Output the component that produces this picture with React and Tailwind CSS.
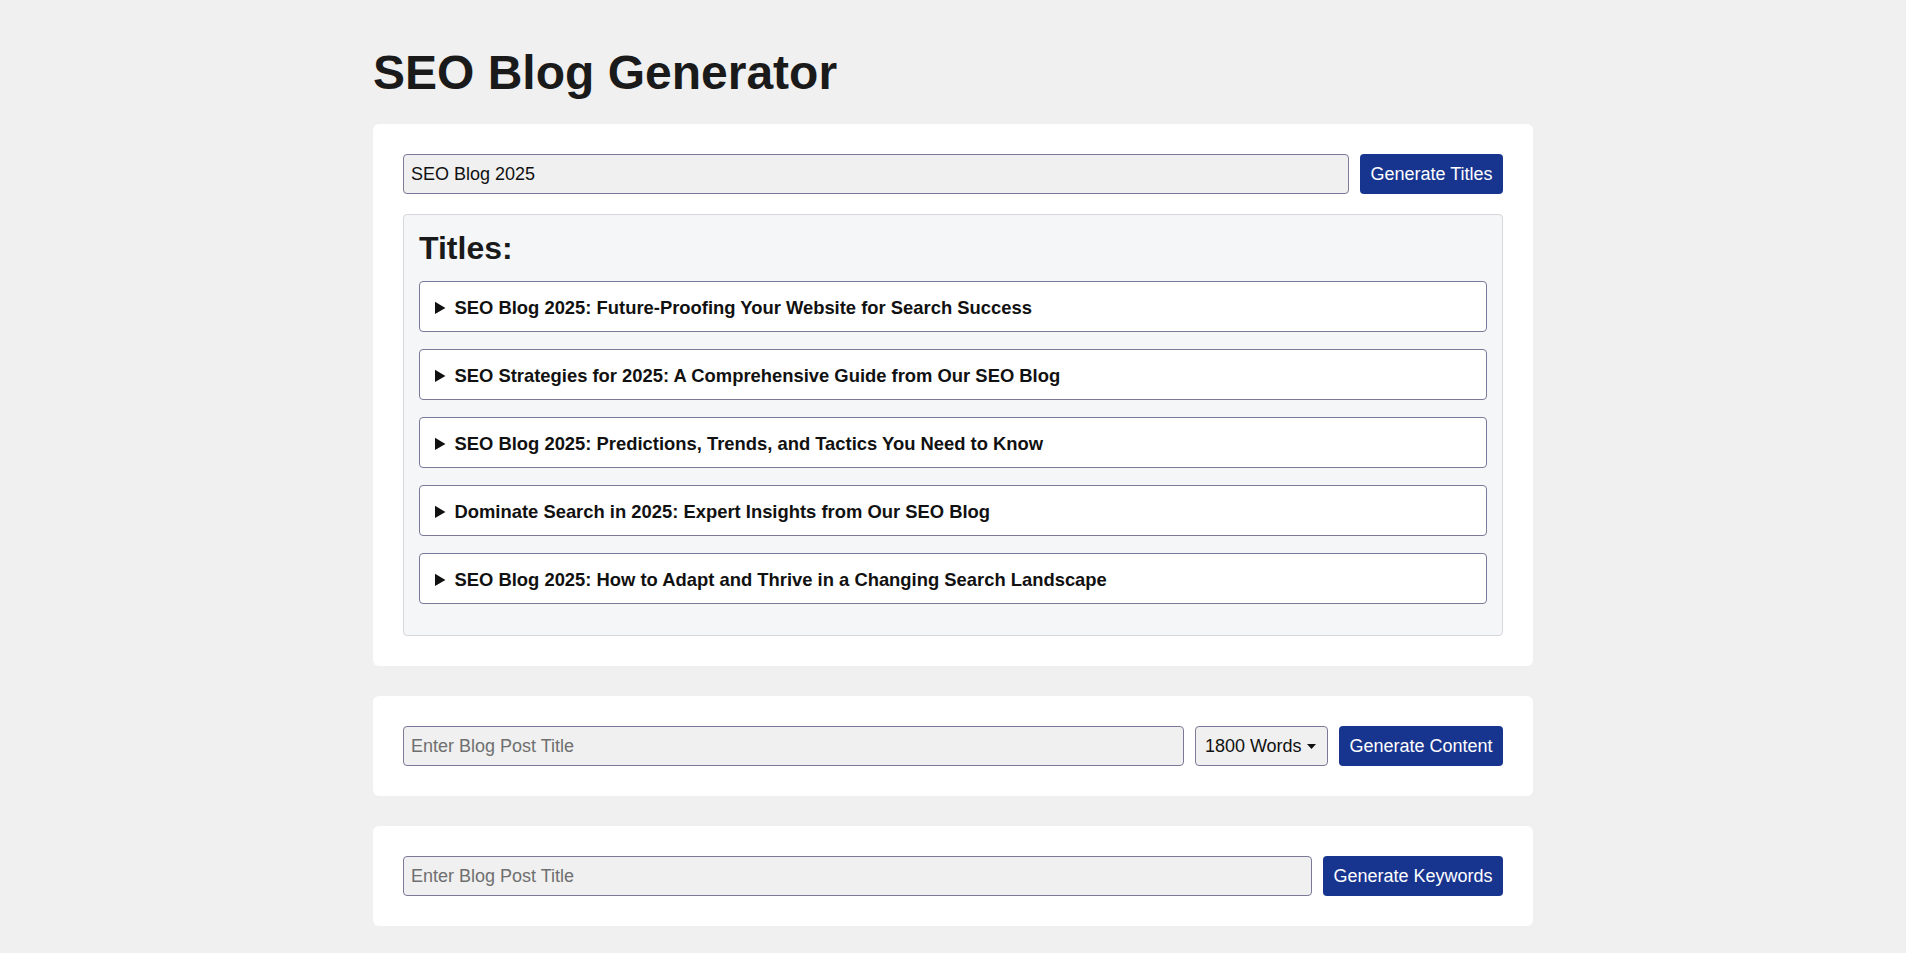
import React from "react";

const titles = [
  "SEO Blog 2025: Future-Proofing Your Website for Search Success",
  "SEO Strategies for 2025: A Comprehensive Guide from Our SEO Blog",
  "SEO Blog 2025: Predictions, Trends, and Tactics You Need to Know",
  "Dominate Search in 2025: Expert Insights from Our SEO Blog",
  "SEO Blog 2025: How to Adapt and Thrive in a Changing Search Landscape",
];

const inputCls =
  "flex-1 min-w-0 h-[40px] rounded-[4px] border border-[#7a7a98] bg-[#f0f0f0] pl-[7px] pr-[7px] text-[18px] text-[#111111] placeholder:text-[#6f6f6f] outline-none";
const btnCls =
  "h-[40px] shrink-0 rounded-[4px] bg-[#17348f] px-[10.5px] text-[18px] text-white whitespace-nowrap";

export default function App() {
  return (
    <div
      className="min-h-screen bg-[#f0f0f0] text-[#1a1a1a]"
      style={{ fontFamily: '"Liberation Sans", Arial, Helvetica, sans-serif' }}
    >
      <div className="mx-auto w-[1160px] pt-[45px] pb-[27px]">
        <h1 className="mb-[24px] text-[48px] font-bold leading-[55px] text-[#1a1a1a]">
          SEO Blog Generator
        </h1>

        <div className="flex flex-col gap-[30px]">
          <div className="rounded-[6px] bg-white p-[30px]">
            <div className="flex gap-[11px]">
              <input className={inputCls} defaultValue="SEO Blog 2025" />
              <button className={btnCls}>Generate Titles</button>
            </div>
            <div className="mt-[20px] rounded-[4px] border border-[#d6d7db] bg-[#f5f6f8] px-[15px] pt-[15px] pb-[15px]">
              <h2 className="mb-[14px] text-[32px] font-bold leading-[37px] text-[#1a1a1a]">
                Titles:
              </h2>
              <div className="flex flex-col gap-[17px]">
                {titles.map((t) => (
                  <details
                    key={t}
                    className="rounded-[4px] border border-[#7a7a98] bg-white px-[15px] pt-[16px] pb-[14px]"
                  >
                    <summary className="cursor-pointer text-[18.4px] font-bold leading-[19px] text-[#111111]">
                      {t}
                    </summary>
                  </details>
                ))}
              </div>
              <div className="h-[16px]" />
            </div>
          </div>

          <div className="rounded-[6px] bg-white p-[30px]">
            <div className="flex gap-[11px]">
              <input className={inputCls} placeholder="Enter Blog Post Title" />
              <button className="flex h-[40px] w-[133px] shrink-0 items-center justify-between rounded-[4px] border border-[#7a7a98] bg-[#f0f0f0] pl-[9px] pr-[11px] text-[18px] text-[#111111]">
                <span>1800 Words</span>
                <svg width="9" height="5" viewBox="0 0 9 5" className="mt-[1px]">
                  <path d="M0 0 L9 0 L4.5 5 Z" fill="#111111" />
                </svg>
              </button>
              <button className={btnCls}>Generate Content</button>
            </div>
          </div>

          <div className="rounded-[6px] bg-white p-[30px]">
            <div className="flex gap-[11px]">
              <input className={inputCls} placeholder="Enter Blog Post Title" />
              <button className={btnCls}>Generate Keywords</button>
            </div>
          </div>
        </div>
      </div>
    </div>
  );
}
